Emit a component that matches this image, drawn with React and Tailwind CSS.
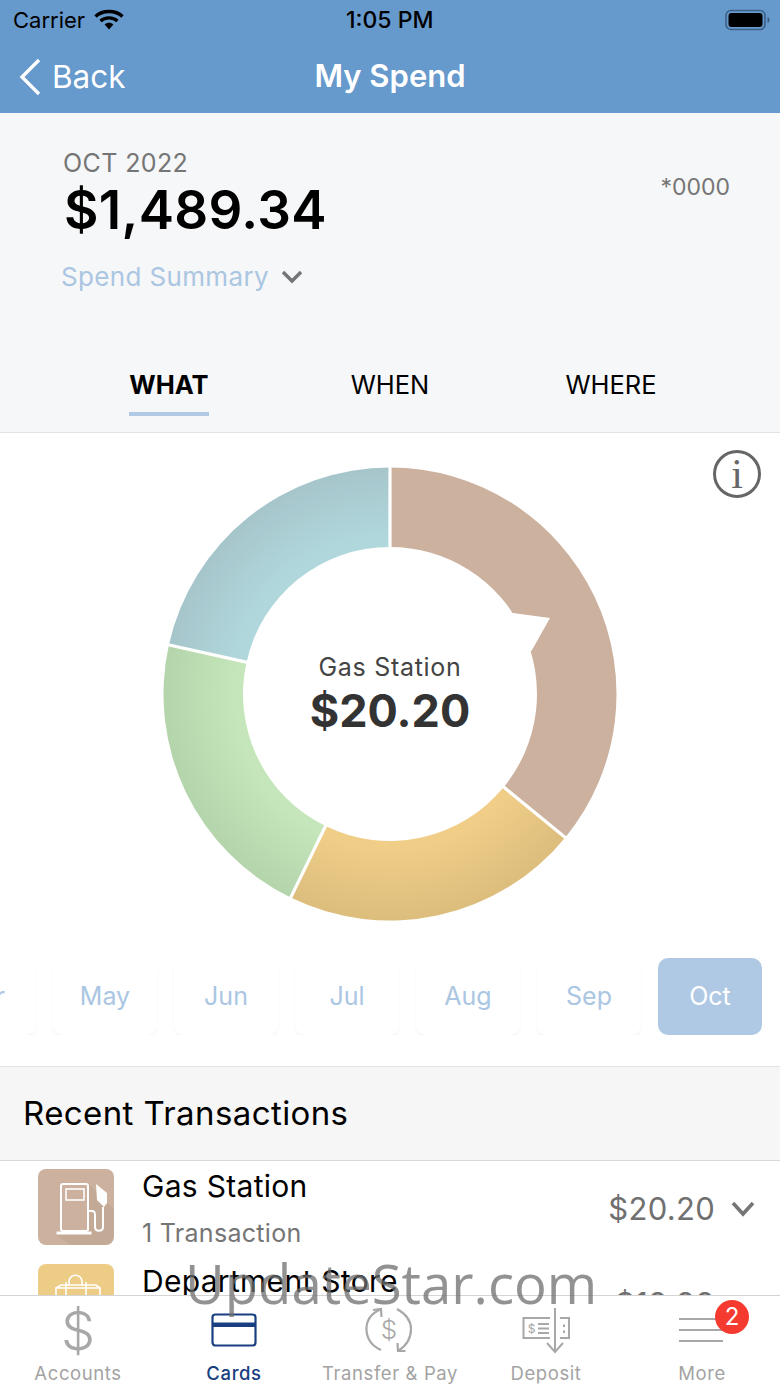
import React from "react";

const C = 230;
const pt = (r, deg) => {
  const a = (deg * Math.PI) / 180;
  return [C + r * Math.sin(a), C - r * Math.cos(a)];
};
const seg = (r0, r1, a, b) => {
  const [x1, y1] = pt(r1, a);
  const [x2, y2] = pt(r1, b);
  const [x3, y3] = pt(r0, b);
  const [x4, y4] = pt(r0, a);
  const large = b - a > 180 ? 1 : 0;
  return `M${x1} ${y1}A${r1} ${r1} 0 ${large} 1 ${x2} ${y2}L${x3} ${y3}A${r0} ${r0} 0 ${large} 0 ${x4} ${y4}Z`;
};

function Donut() {
  const R0 = 147;
  const R1 = 226.5;
  const cuts = [0, 129.3, 206, 282.5];
  return (
    <svg width="460" height="460" viewBox="0 0 460 460" className="block">
      <defs>
        <radialGradient id="y" gradientUnits="userSpaceOnUse" cx="230" cy="230" r="227">
          <stop offset="0.68" stopColor="#f0ce88" />
          <stop offset="1" stopColor="#dcbd7c" />
        </radialGradient>
        <radialGradient id="g" gradientUnits="userSpaceOnUse" cx="230" cy="230" r="227">
          <stop offset="0.68" stopColor="#c5e6ba" />
          <stop offset="1" stopColor="#b4d4ac" />
        </radialGradient>
        <radialGradient id="b" gradientUnits="userSpaceOnUse" cx="230" cy="230" r="227">
          <stop offset="0.68" stopColor="#b0d8dc" />
          <stop offset="1" stopColor="#a6c5cb" />
        </radialGradient>
      </defs>
      <path d={seg(R0, R1, 0, 129.3)} fill="#cbb19e" />
      <path d={seg(R0, R1, 129.3, 206)} fill="url(#y)" />
      <path d={seg(R0, R1, 206, 282.5)} fill="url(#g)" />
      <path d={seg(R0, R1, 282.5, 360)} fill="url(#b)" />
      {cuts.map((d) => {
        const [x1, y1] = pt(R0 - 2, d);
        const [x2, y2] = pt(R1 + 2, d);
        return <line key={d} x1={x1} y1={y1} x2={x2} y2={y2} stroke="#fff" strokeWidth="3.2" />;
      })}
      <polygon points="340,150 353,149 390,154 372,186 360,200 320,200" fill="#fff" />
    </svg>
  );
}

function Wifi() {
  return (
    <svg width="30" height="22" viewBox="0 0 30 22" className="block">
      <path d="M1.5 7.5C8.5 .8 21.5 .8 28.5 7.5" fill="none" stroke="#000" strokeWidth="3.4" />
      <path d="M6.5 12C11 7.8 19 7.8 23.5 12" fill="none" stroke="#000" strokeWidth="3.4" />
      <path d="M10.6 15.4C13 13.2 17 13.2 19.4 15.4L15 20.5Z" fill="#000" />
    </svg>
  );
}

function Battery() {
  return (
    <svg width="46" height="22" viewBox="0 0 46 22" className="block">
      <rect x="1" y="1.5" width="39" height="19" rx="5" fill="none" stroke="#3d5f86" strokeWidth="1.6" />
      <rect x="3.5" y="4" width="34" height="14" rx="3" fill="#000" />
      <path d="M42.5 8c1.5.4 2 1.5 2 3s-.5 2.6-2 3z" fill="#3d5f86" />
    </svg>
  );
}

function Chevron({ className, color = "#757575", w = 22, h = 14, sw = 3.4 }) {
  return (
    <svg width={w} height={h} viewBox={`0 0 ${w} ${h}`} className={className}>
      <path d={`M2 2L${w / 2} ${h - 3}L${w - 2} 2`} fill="none" stroke={color} strokeWidth={sw} />
    </svg>
  );
}

function GasIcon() {
  return (
    <svg width="76" height="76" viewBox="0 0 76 76" className="block">
      <path d="M50 14L76 40V68a8 8 0 0 1-8 8H32L18 65V62h32z" fill="#000" opacity="0.04" />
      <rect x="23" y="15" width="27" height="47" rx="2" fill="none" stroke="#fff" strokeWidth="2" />
      <rect x="28" y="20" width="18" height="11" fill="none" stroke="#fff" strokeWidth="1.6" />
      <rect x="18.500" y="62.500" width="35" height="3" fill="#fff" />
      <path d="M50 42h4c2 0 3 1.500 3 4v12c0 5 8 5 8 0V38" fill="none" stroke="#fff" strokeWidth="2" />
      <path d="M58 15L69 24V34L66 38L59 31z" fill="#fff" />
    </svg>
  );
}

function BagIcon() {
  return (
    <svg width="76" height="76" viewBox="0 0 76 76" className="block">
      <path d="M31 22V18c0-9 13-9 13 0v4" fill="none" stroke="#fff" strokeWidth="1.6" />
      <path d="M18 40V24h44v16M18 24l5-3h35l4 3" fill="none" stroke="#fff" strokeWidth="1.6" />
      <path d="M28 18v30M48 18v30" fill="none" stroke="#fff" strokeWidth="1.6" />
    </svg>
  );
}

function CardIcon() {
  return (
    <svg width="50" height="50" viewBox="0 0 50 50" className="block">
      <rect x="3.500" y="8.500" width="43" height="31" rx="3" fill="none" stroke="#1a3f80" strokeWidth="2.2" />
      <rect x="3" y="16.500" width="44" height="4.500" fill="#1a3f80" />
    </svg>
  );
}

function TransferIcon() {
  return (
    <svg width="50" height="50" viewBox="0 0 50 50" className="block">
      <g fill="none" stroke="#a8a8a8" strokeWidth="2.2">
        <path d="M16 3C5 8 1 15 1.500 24C2 33 7 40 16 44" />
        <path d="M8 4L16 3L16.500 11" />
        <path d="M32 3C41 8 46 15 46 23C46 32 41 40 33 45" />
        <path d="M40.500 45H33L32.500 37" />
      </g>
      <text x="24" y="33" textAnchor="middle" fontFamily="Inter, sans-serif" fontSize="26" fontWeight="300" fill="#a8a8a8">$</text>
    </svg>
  );
}

function DepositIcon() {
  return (
    <svg width="50" height="50" viewBox="0 0 50 50" className="block">
      <g fill="none" stroke="#a8a8a8" strokeWidth="2">
        <path d="M29 12H2.500V32H29" />
        <path d="M39 12H48V32H39" />
        <path d="M34 2V46" />
        <path d="M26 37L34 46L42 37" />
        <path d="M17 18H28M17 22.500H28M17 27H28" />
        <path d="M43 18.500V21M43 24.500V27" />
      </g>
      <text x="10.500" y="27" textAnchor="middle" fontFamily="Inter, sans-serif" fontSize="12" fill="#a8a8a8">$</text>
    </svg>
  );
}

function MoreIcon() {
  return (
    <svg width="50" height="50" viewBox="0 0 50 50" className="block">
      <path d="M2 13H46M2 24H46M2 35H46" stroke="#a8a8a8" strokeWidth="2.2" />
    </svg>
  );
}

function Row({ icon, bg, title, sub, amount }) {
  return (
    <div className="h-[95px] shrink-0 flex pl-[38px] pr-[25px] pt-[8px]">
      <div className={`w-[76px] h-[76px] rounded-lg shrink-0 overflow-hidden ${bg}`}>{icon}</div>
      <div className="ml-[28px] flex-1">
        <div className="text-[30px] leading-[34px] tracking-[0.3px] text-black">{title}</div>
        <div className="mt-[15px] text-[25px] leading-[30px] tracking-[0.3px] text-[#757575]">{sub}</div>
      </div>
      <div className="flex items-center h-[80px] gap-[16px] self-start">
        <span className="text-[31px] leading-[36px] tracking-[0.3px] text-[#707070]">{amount}</span>
        <Chevron w={24} h={16} sw={3.6} color="#757575" />
      </div>
    </div>
  );
}

export default function App() {
  const months = ["Apr", "May", "Jun", "Jul", "Aug", "Sep"];
  const tabs = [
    { label: "Accounts", icon: <span className="block text-[54px] leading-[50px] font-light text-[#a8a8a8] font-['Inter',sans-serif]">$</span> },
    { label: "Cards", icon: <CardIcon />, active: true },
    { label: "Transfer & Pay", icon: <TransferIcon /> },
    { label: "Deposit", icon: <DepositIcon /> },
    { label: "More", icon: <MoreIcon />, badge: true },
  ];
  return (
    <div className="relative w-[780px] h-[1387px] overflow-hidden bg-white flex flex-col font-['Inter','Liberation_Sans',sans-serif]">
      <header className="h-[113px] shrink-0 bg-[#6699cc] flex flex-col">
        <div className="h-[40px] flex items-center justify-between pl-[13px] pr-[9px] relative">
          <div className="flex items-center gap-[9px]">
            <span className="text-[22px] leading-[26px] text-black">Carrier</span>
            <Wifi />
          </div>
          <span className="text-[23px] leading-[26px] font-medium text-black absolute left-[346px]">1:05 PM</span>
          <Battery />
        </div>
        <div className="flex-1 relative flex items-center justify-center">
          <div className="absolute left-[18px] top-[15px] flex items-center gap-[10px] h-[44px]">
            <svg width="24" height="40" viewBox="0 0 24 40" className="block">
              <path d="M21 3L4 20L21 37" fill="none" stroke="#fff" strokeWidth="3.4" />
            </svg>
            <span className="text-[31.500px] leading-[36px] text-white">Back</span>
          </div>
          <span className="text-[31px] leading-[36px] -mt-[2px] font-semibold text-white">My Spend</span>
        </div>
      </header>

      <section className="shrink-0 bg-[#f6f7f8] border-b border-[#e3e3e3] pb-[16px]">
        <div className="flex justify-between pl-[63px] pr-[50px] pt-[35px]">
          <div>
            <div className="text-[25px] leading-[30px] tracking-[0.4px] text-[#757575]">OCT 2022</div>
            <div className="mt-[4px] ml-[1px] text-[53px] leading-[56px] tracking-[0.3px] font-semibold text-black">$1,489.34</div>
            <div className="mt-[24px] -ml-[2px] flex items-center gap-[12px]">
              <span className="text-[26px] leading-[30px] tracking-[0.35px] text-[#aac6e2]">Spend Summary</span>
              <Chevron w={22} h={14} sw={3.4} />
            </div>
          </div>
          <div className="mt-[24px] text-[23px] leading-[30px] text-[#757575]">*0000</div>
        </div>
        <div className="mt-[78px] flex justify-center">
          {["WHAT", "WHEN", "WHERE"].map((t, i) => (
            <div key={t} className="w-[221px] flex flex-col items-center">
              <span className={`text-[25.500px] leading-[30px] text-black ${i === 0 ? "font-bold border-b-4 border-[#b1c9e4] pb-[12px]" : "pb-[16px]"}`}>{t}</span>
            </div>
          ))}
        </div>
      </section>

      <section className="relative shrink-0 border-b border-[#e3e3e3] pt-[31px] pb-[31px]">
        <svg width="50" height="50" viewBox="0 0 50 50" className="absolute left-[712px] top-[16px]">
          <circle cx="25" cy="25" r="22.500" fill="none" stroke="#666" strokeWidth="3" />
          <text x="25" y="39" textAnchor="middle" fontFamily="Liberation Serif, serif" fontWeight="400" fontSize="42" fill="#666">i</text>
        </svg>
        <div className="relative flex justify-center">
          <Donut />
          <div className="absolute inset-0 flex flex-col items-center justify-center">
            <span className="text-[25px] leading-[30px] text-[#444] tracking-[0.7px] mb-[3px]">Gas Station</span>
            <span className="text-[45px] leading-[52px] font-bold text-[#333]">$20.20</span>
          </div>
        </div>
        <div className="mt-[34px] flex justify-end gap-[17px] pr-[18px] overflow-hidden">
          {months.map((m) => (
            <div key={m} className="w-[104px] h-[77px] shrink-0 rounded-[10px] bg-white shadow-[0_3px_4px_-1px_rgba(0,0,0,0.05)] flex items-center justify-center text-[25px] text-[#aac6e2]">
              {m}
            </div>
          ))}
          <div className="w-[104px] h-[77px] shrink-0 rounded-[10px] bg-[#afc9e4] flex items-center justify-center text-[25px] text-white">Oct</div>
        </div>
      </section>

      <div className="h-[94px] shrink-0 bg-[#f6f6f6] border-b border-[#d8d8d8] flex items-center pl-[23px]">
        <span className="text-[33px] leading-[40px] text-black tracking-[0.4px] -mt-[2px]">Recent Transactions</span>
      </div>

      <div className="flex-1 overflow-hidden">
        <Row icon={<GasIcon />} bg="bg-[#cbb19e]" title="Gas Station" sub="1 Transaction" amount="$20.20" />
        <Row icon={<BagIcon />} bg="bg-[#edcd86]" title="Department Store" sub="1 Transaction" amount="$19.99" />
      </div>

      <nav className="h-[92px] shrink-0 bg-white border-t border-[#d4d4d4] grid grid-cols-5 pt-[10px]">
        {tabs.map((t) => (
          <div key={t.label} className="relative flex flex-col items-center">
            <div className="h-[50px] flex items-center justify-center">{t.icon}</div>
            <span className={`mt-[6px] text-[18.500px] leading-[22px] tracking-[0.6px] whitespace-nowrap ${t.active ? "text-[#1a3f80] font-medium" : "text-[#a3a3a3]"}`}>{t.label}</span>
            {t.badge && (
              <span className="absolute left-[91px] top-[-6px] w-[34px] h-[34px] rounded-full bg-[#f53b30] text-white text-[24px] leading-[34px] text-center">2</span>
            )}
          </div>
        ))}
      </nav>

      <div className="absolute left-[185px] top-[1243px] text-[54.500px] leading-[80px] text-[#6e6e6e]/75 font-['Open_Sans',sans-serif] pointer-events-none whitespace-nowrap">UpdateStar.com</div>
    </div>
  );
}
